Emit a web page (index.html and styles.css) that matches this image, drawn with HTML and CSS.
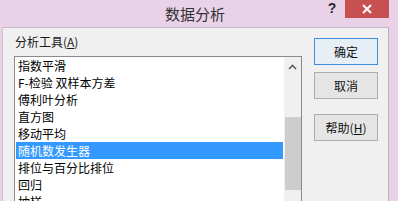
FILE: index.html
```html
<!DOCTYPE html>
<html lang="zh-CN">
<head>
<meta charset="utf-8">
<title>数据分析</title>
<link rel="stylesheet" href="styles.css">
</head>
<body>
<div class="window">
  <div class="titlebar">
    <div class="spacer"></div>
    <div class="title">数据分析</div>
    <div class="controls">
      <div class="help">?</div>
      <div class="close">
        <svg width="10" height="10" viewBox="0 0 10 10"><path d="M1 1 L9 9 M9 1 L1 9" stroke="#fff" stroke-width="2" fill="none"/></svg>
      </div>
    </div>
  </div>
  <div class="body">
    <div class="left">
      <div class="label">分析工具(<u>A</u>)</div>
      <div class="listbox">
        <div class="items">
          <div class="item">指数平滑</div>
          <div class="item">F-检验 双样本方差</div>
          <div class="item">傅利叶分析</div>
          <div class="item">直方图</div>
          <div class="item">移动平均</div>
          <div class="item selected">随机数发生器</div>
          <div class="item">排位与百分比排位</div>
          <div class="item">回归</div>
          <div class="item">抽样</div>
        </div>
        <div class="scrollbar">
          <div class="arrow">
            <svg width="9" height="6" viewBox="0 0 9 6"><path d="M1 5 L4.5 1.5 L8 5" stroke="#606060" stroke-width="1.6" fill="none"/></svg>
          </div>
          <div class="thumb"></div>
        </div>
      </div>
    </div>
    <div class="buttons">
      <div class="btn default">确定</div>
      <div class="btn">取消</div>
      <div class="btn help-btn">帮助(<u>H</u>)</div>
    </div>
  </div>
</div>
</body>
</html>
```

FILE: styles.css
```css
html, body {
  margin: 0;
  padding: 0;
  overflow: hidden;
}
body {
  width: 398px;
  height: 201px;
  background: #e9d1e7;
  font-family: "Noto Sans CJK SC", "Noto Sans", sans-serif;
  color: #000;
}
.window {
  display: flex;
  flex-direction: column;
  height: 201px;
}
.titlebar {
  height: 27px;
  display: grid;
  grid-template-columns: 1fr auto 1fr;
  flex: none;
}
.title {
  font-size: 15px;
  line-height: 27px;
  color: #333;
  padding-right: 8px;
}
.controls {
  display: flex;
  justify-content: flex-end;
  align-items: flex-start;
  padding-right: 9px;
}
.help {
  width: 26px;
  height: 18px;
  font-size: 14px;
  font-weight: bold;
  line-height: 17px;
  text-align: center;
  color: #2a2a2a;
  font-family: "Liberation Sans", sans-serif;
}
.close {
  width: 44px;
  height: 18px;
  background: #c75050;
  display: flex;
  align-items: center;
  justify-content: center;
}
.body {
  flex: 1;
  margin-left: 2px;
  margin-right: 9px;
  background: #f0f0f0;
  border-top: 1px solid #c8b8c6;
  border-left: 1px solid #d2c2d0;
  border-right: 1px solid #bfb0bd;
  display: flex;
  overflow: hidden;
}
.left {
  padding-left: 11px;
  display: flex;
  flex-direction: column;
}
.label {
  font-size: 12px;
  line-height: 17px;
  margin-top: 5px;
  padding-left: 1px;
  color: #1a1a1a;
}
.listbox {
  margin-top: 6px;
  width: 288px;
  height: 170px;
  box-sizing: border-box;
  border: 1px solid #8a8a8a;
  background: #fff;
  display: flex;
  flex: none;
}
.items {
  flex: 1;
  padding: 0 1px;
}
.item {
  height: 17px;
  line-height: 17px;
  font-size: 12px;
  padding-left: 2px;
  white-space: nowrap;
}
.item.selected {
  background: #3399ff;
  color: #fff;
}
.scrollbar {
  width: 17px;
  background: #f0f0f0;
  display: flex;
  flex-direction: column;
  align-items: center;
}
.arrow {
  height: 17px;
  width: 17px;
  display: flex;
  align-items: center;
  justify-content: center;
  padding-top: 3px;
  box-sizing: border-box;
}
.thumb {
  margin-top: 43px;
  width: 16px;
  height: 73px;
  background: #cdcdcd;
}
.buttons {
  margin-left: 12px;
  padding-top: 10px;
  display: flex;
  flex-direction: column;
  gap: 7px;
}
.btn {
  width: 64px;
  height: 27px;
  box-sizing: border-box;
  border: 1px solid #adadad;
  background: #e5e5e5;
  font-size: 12px;
  line-height: 25px;
  text-align: center;
  color: #111;
}
.btn.default {
  border-color: #3c8ddb;
  background: #e6eef6;
}
.btn.help-btn {
  margin-top: 8px;
}
```
